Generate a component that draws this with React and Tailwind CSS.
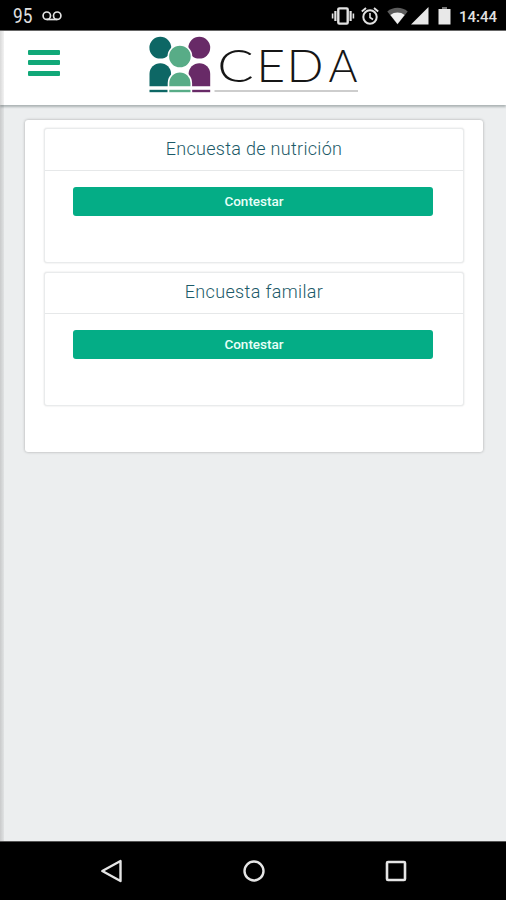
import React from "react";

const SURVEYS = [
  { title: "Encuesta de nutrición", action: "Contestar", card: "h-[135px]", head: "h-[42px]", tracking: "tracking-[0.3px]" },
  { title: "Encuesta familar", action: "Contestar", card: "h-[134px]", head: "h-[41px]", tracking: "tracking-[0.35px]" },
];

const LOGO_LETTERS = [
  { char: "C", x: 217.2, width: 36.5 },
  { char: "E", x: 256.2, width: 29 },
  { char: "D", x: 286.5, width: 37 },
  { char: "A", x: 328.5, width: 29 },
];

function StatusBar() {
  return (
    <header className="h-[31px] shrink-0 bg-black border-b border-[#666] flex items-center justify-between pl-[13px] pr-[9px] text-[#e2e2e2]">
      <div className="flex items-center">
        <span className="w-[19px] text-[19.5px] leading-none origin-left scale-x-[0.88] mt-[3px]">
          95
        </span>
        <svg width="20" height="10" viewBox="0 0 20 10" fill="none" stroke="currentColor" strokeWidth="1.7" className="ml-[10px] mt-px">
          <circle cx="4.8" cy="4.7" r="3.7" />
          <circle cx="15.2" cy="4.7" r="3.7" />
          <path d="M4.8 8.5h10.4" />
        </svg>
      </div>
      <div className="flex items-center mt-[2px]">
        <svg width="24" height="18" viewBox="0 0 24 18" fill="none" stroke="currentColor">
          <rect x="7.3" y="1.4" width="9.4" height="15.2" rx="1" strokeWidth="2.4" />
          <path d="M4.4 4v10M19.6 4v10" strokeWidth="2.2" />
          <path d="M1.6 6.500v5M22.400 6.500v5" strokeWidth="1.6" />
        </svg>
        <svg width="18" height="18" viewBox="0 0 18 18" fill="none" stroke="currentColor" className="ml-[6px]">
          <circle cx="9" cy="10" r="6.7" strokeWidth="2" />
          <path d="M9 6v4.5l3 2" strokeWidth="1.6" />
          <path d="M.8 4.5 5 1M17.2 4.5 13 1" strokeWidth="1.9" />
        </svg>
        <svg width="21" height="18" viewBox="0 0 21 18" className="ml-[8px]">
          <path d="M.3 4.5C6-.5 15-.5 20.7 4.5L10.5 17.500Z" fill="#5c5c5c" />
          <path d="M3.4 8C7.5 4.700 13.5 4.700 17.6 8L10.5 17Z" fill="#f2f2f2" />
        </svg>
        <svg width="18" height="18" viewBox="0 0 18 18" className="ml-[3px]">
          <path d="M0 17.5 17.5 0v17.5Z" fill="#e8e8e8" />
        </svg>
        <svg width="13" height="18" viewBox="0 0 13 18" className="ml-[9px]">
          <path d="M4 0h5v2H4z" fill="#777" />
          <path d="M.5 2h12v15.5H.5z" fill="#e8e8e8" />
        </svg>
        <span className="ml-[8px] mt-[3px] w-[38px] text-[15px] leading-none font-medium">
          14:44
        </span>
      </div>
    </header>
  );
}

function Logo() {
  return (
    <svg width="210" height="60" viewBox="149 35 210 60">
      <g fill="#0d6765">
        <circle cx="160.3" cy="47.7" r="10.9" />
        <path d="M149.5 86.3V74a10.8 10.8 0 0 1 21.6 0v12.3Z" />
        <path d="M149.5 89.8h18v2.4h-18z" />
      </g>
      <g fill="#682a67">
        <circle cx="199.3" cy="47.7" r="10.9" />
        <path d="M188.6 86.3V74a10.800 10.8 0 0 1 21.6 0v12.3Z" />
        <path d="M192.2 89.8h18v2.4h-18z" />
      </g>
      <g fill="#58ac87" stroke="#fff" strokeWidth="1.6">
        <circle cx="179.9" cy="56.500" r="11.6" />
        <path d="M168.500 87.1V83a11.4 11.4 0 0 1 22.8 0v4.1Z" />
      </g>
      <path d="M169.3 89.8h21.2v2.4h-21.2z" fill="#58ac87" />
      <path d="M214.5 91h143.5" stroke="#bdbdbd" strokeWidth="1.5" />
      <g className="font-['Lato'] font-light" fill="#161616" fontSize="45">
        {LOGO_LETTERS.map((l) => (
          <text key={l.char} x={l.x} y="82" textLength={l.width} lengthAdjust="spacingAndGlyphs">
            {l.char}
          </text>
        ))}
      </g>
    </svg>
  );
}

function AppHeader() {
  return (
    <div className="h-[74px] shrink-0 bg-white flex items-start shadow-[0_2px_2px_rgba(80,95,95,0.4)]">
      <button className="ml-[28px] mt-[19px] w-[32px] flex flex-col gap-[5.4px]" aria-label="Menu">
        <span className="h-[5px] w-full rounded-[1px] bg-[#11a878]" />
        <span className="h-[5px] w-full rounded-[1px] bg-[#11a878]" />
        <span className="h-[5px] w-full rounded-[1px] bg-[#11a878]" />
      </button>
      <div className="ml-[89px] mt-[4px]">
        <Logo />
      </div>
    </div>
  );
}

function SurveyCard({ survey }) {
  return (
    <section className={`${survey.card} rounded-[3px] bg-white border border-[#e9ebec] shadow-[0_0_2px_rgba(0,0,0,0.14)]`}>
      <h2 className={`${survey.head} ${survey.tracking} flex items-center justify-center pb-[3px] border-b border-[#e6e8e9] text-[18px] font-light text-[#1c5a68]`}>
        {survey.title}
      </h2>
      <div className="pl-[28px] pr-[30px] pt-[16px]">
        <button className="flex h-[29px] w-full items-center justify-center rounded-[3px] bg-[#04ad86] pb-px pl-[2px] text-[13.5px] font-medium text-[#e8fff8]">
          {survey.action}
        </button>
      </div>
    </section>
  );
}

function NavBar() {
  return (
    <nav className="h-[59px] shrink-0 bg-black border-t border-[#555] flex items-center justify-between pl-[100px] pr-[98px]">
      <svg width="24" height="24" viewBox="0 0 24 24" fill="none" stroke="#e5e5e5" strokeWidth="2.4" strokeLinejoin="round">
        <path d="M2.3 12 20.5 2v20Z" />
      </svg>
      <svg width="24" height="24" viewBox="0 0 24 24" fill="none" stroke="#e5e5e5" strokeWidth="2.4">
        <circle cx="12" cy="12" r="9.5" />
      </svg>
      <svg width="24" height="24" viewBox="0 0 24 24" fill="none" stroke="#e5e5e5" strokeWidth="2.6">
        <rect x="3" y="3" width="18" height="18" rx="1" />
      </svg>
    </nav>
  );
}

export default function App() {
  return (
    <div className="w-[506px] h-[900px] flex flex-col overflow-hidden bg-[#eceeef] font-['Roboto',sans-serif]">
      <StatusBar />
      <div className="relative flex-1 flex flex-col">
        <AppHeader />
        <main className="mt-[15px] ml-[25px] mr-[23px] h-[332px] rounded-[3px] bg-white px-[19px] pt-[8px] flex flex-col gap-[9px] shadow-[0_0_3px_rgba(0,0,0,0.3)]">
          {SURVEYS.map((s) => (
            <SurveyCard key={s.title} survey={s} />
          ))}
        </main>
        <div className="absolute left-0 top-0 h-full w-[4px] bg-linear-to-r from-black/15 to-black/5" />
      </div>
      <NavBar />
    </div>
  );
}
